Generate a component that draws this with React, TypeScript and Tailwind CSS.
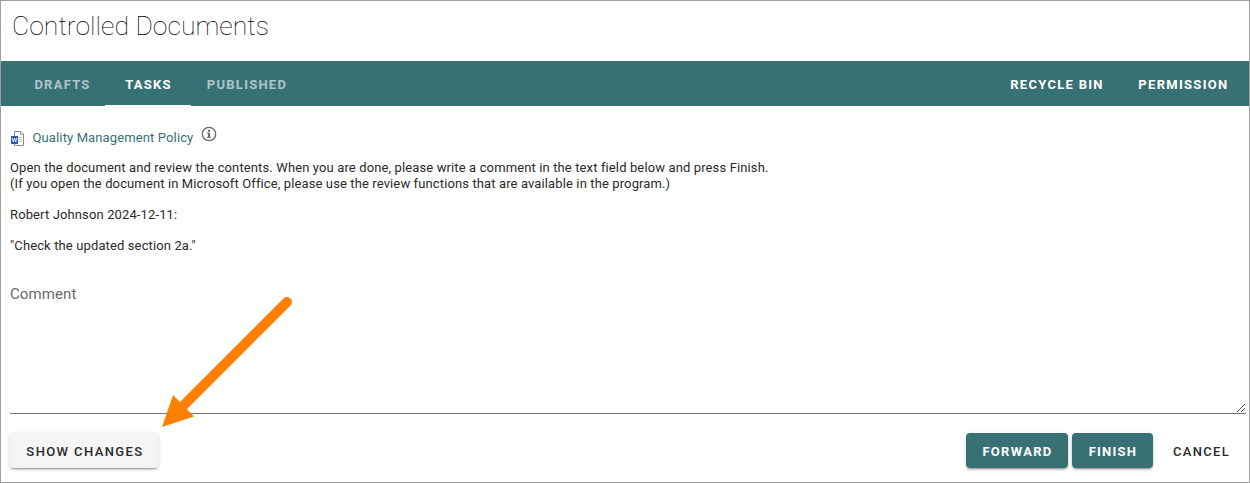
import type { ReactNode } from "react";

function Tab({ label, active = false, className }: { label: string; active?: boolean; className: string }) {
  return (
    <button
      className={`flex h-[45px] items-center justify-center border-b pt-[3px] text-[13px] font-bold tracking-[1.25px] ${
        active ? "border-white text-white" : "border-transparent text-white/60"
      } ${className}`}
    >
      {label}
    </button>
  );
}

function Button({ children, className }: { children: ReactNode; className: string }) {
  return (
    <button className={`flex h-[35px] items-center justify-center rounded pt-[2px] text-[13px] whitespace-nowrap ${className}`}>
      {children}
    </button>
  );
}

const raised = "shadow-[0_3px_1px_-2px_rgba(0,0,0,0.2),0_2px_2px_0_rgba(0,0,0,0.14),0_1px_5px_0_rgba(0,0,0,0.12)]";

function WordIcon() {
  return (
    <svg width="14" height="16" viewBox="0 0 14 16" className="shrink-0">
      <path d="M3.5 1.5h6.500l2.500 2.500v11.500h-9z" fill="#fff" stroke="#8b8b8b" />
      <path d="M9.500 1.500v3h3" fill="#eee" stroke="#9b9b9b" />
      <path d="M8 7.500h3M8 9.500h3M8 11.500h3" stroke="#bcc4d0" />
      <path d="M0 6h7v8H0z" fill="#2b5db0" />
      <path d="M1.300 8l1 3.800L3.500 8.300l1.200 3.500 1-3.800" fill="none" stroke="#fff" strokeWidth="0.9" />
    </svg>
  );
}

function InfoIcon() {
  return (
    <svg width="16" height="16" viewBox="0 0 16 16" fill="none" className="shrink-0">
      <circle cx="8" cy="8" r="6.700" stroke="#696969" strokeWidth="1.300" />
      <path d="M7 3.700h2v2H7zM6 6.800h3v4h1v1H6v-1h1V7.800H6z" fill="#696969" />
    </svg>
  );
}

export default function App() {
  return (
    <div className="relative flex h-[483px] w-[1250px] flex-col overflow-hidden border border-[#a0a0a0] bg-white font-['Roboto',sans-serif] text-[#2a2a2a]">
      <header className="h-[60px] pt-[5px] pl-[11px]">
        <h1 className="text-[26.6px] leading-[40px] font-thin text-black">Controlled Documents</h1>
      </header>

      <nav className="flex h-[45px] shrink-0 justify-between bg-[#387174] pr-[4px] pl-[18px]">
        <div className="flex">
          <Tab label="DRAFTS" className="w-[86px] pl-px" />
          <Tab label="TASKS" active className="w-[86px] pl-px" />
          <Tab label="PUBLISHED" className="w-[112px]" />
        </div>
        <div className="flex text-[13px] font-bold tracking-[1.3px] text-white">
          <button className="pt-[3px] pr-[34.5px]">RECYCLE BIN</button>
          <button className="pt-[3px] pr-[16.5px]">PERMISSION</button>
        </div>
      </nav>

      <main className="flex flex-col pr-[3px] pl-[9px] text-[13px] leading-[15.5px] tracking-[0.125px]">
        <div className="flex h-[54px] items-start pt-[24px] pl-px">
          <WordIcon />
          <a className="ml-[7.5px] leading-[16px] text-[#387174]">Quality Management Policy</a>
          <span className="-mt-[4px] ml-[7.5px]">
            <InfoIcon />
          </span>
        </div>
        <p>Open the document and review the contents. When you are done, please write a comment in the text field below and press Finish.</p>
        <p className="tracking-[0.12px]">(If you open the document in Microsoft Office, please use the review functions that are available in the program.)</p>
        <p className="mt-[15.5px]">Robert Johnson 2024-12-11:</p>
        <p className="mt-[15.5px]">"Check the updated section 2a."</p>
        <div className="mt-[31px] flex h-[130px] flex-col justify-between border-b border-[#757575]">
          <label className="text-[15px] leading-[20px] tracking-[0.1px] text-[#6b6b6b]">Comment</label>
          <svg width="10" height="9" viewBox="0 0 10 9" className="self-end" shapeRendering="crispEdges">
            <path d="M1 8L9 0M5 8L9 4" stroke="#555" fill="none" />
          </svg>
        </div>
      </main>

      <footer className="mt-[19px] flex justify-between pr-[4px] pl-[9px]">
        <Button className={`w-[148px] bg-[#f5f5f5] pl-[2px] font-medium tracking-[1.4px] ${raised}`}>SHOW CHANGES</Button>
        <div className="flex">
          <Button className={`w-[102px] bg-[#387174] pl-px font-bold tracking-[1.3px] text-white ${raised}`}>FORWARD</Button>
          <Button className={`ml-[4px] w-[81px] bg-[#387174] pl-px font-bold tracking-[1.25px] text-white ${raised}`}>FINISH</Button>
          <Button className="w-[92px] pl-[5px] font-medium tracking-[1.3px]">CANCEL</Button>
        </div>
      </footer>

      <svg className="pointer-events-none absolute top-[289px] left-[159px]" width="140" height="140" viewBox="160 290 140 140">
        <path d="M287 302L182 407" stroke="#ff8000" strokeWidth="10" strokeLinecap="round" />
        <path d="M162 427L173 395L194 416.500Z" fill="#ff8000" />
      </svg>
    </div>
  );
}
